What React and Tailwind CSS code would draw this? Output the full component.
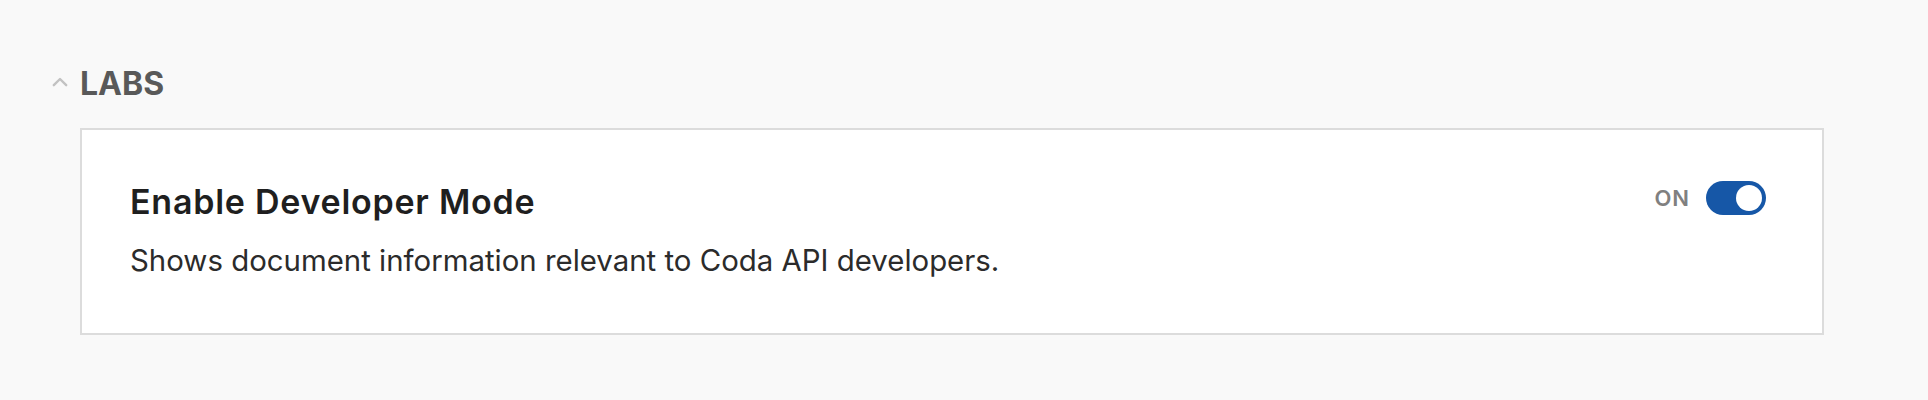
export default function App() {
  return (
    <div className="min-h-[400px] w-full bg-[#f9f9f9] pt-[62px] pl-[80px] pr-[104px]" style={{ fontFamily: 'Inter, "Noto Sans", sans-serif' }}>
      <div className="relative flex items-center h-[44px]">
        <svg className="absolute left-[-28px] top-[14px]" width="16" height="11" viewBox="0 0 16 11" fill="none">
          <path d="M1.8 9.2 L8 3 L14.2 9.2" stroke="#c2c2c2" strokeWidth="2.4" strokeLinecap="round" strokeLinejoin="round" />
        </svg>
        <span className="text-[32px] font-bold text-[#595959] leading-none">LABS</span>
      </div>
      <div className="mt-[22px] bg-white border-2 border-[#dcdcdc] pl-[48px] pr-[56px] pt-[52px] pb-[54px] flex items-start justify-between">
        <div className="flex flex-col">
          <div className="text-[34px] font-semibold text-[#1f1f1f] leading-[40px] tracking-[0.75px]">Enable Developer Mode</div>
          <div className="mt-[21px] text-[29.4px] text-[#2b2b2b] leading-[36px]">Shows document information relevant to Coda API developers.</div>
        </div>
        <div className="flex items-center gap-[16px] -mt-[1px]">
          <span className="text-[22px] font-semibold text-[#808080] leading-none tracking-[1px]">ON</span>
          <div className="w-[60px] h-[34px] rounded-full bg-[#1657a7] flex items-center justify-end pr-[4px]">
            <div className="w-[26px] h-[26px] rounded-full bg-white"></div>
          </div>
        </div>
      </div>
    </div>
  );
}
